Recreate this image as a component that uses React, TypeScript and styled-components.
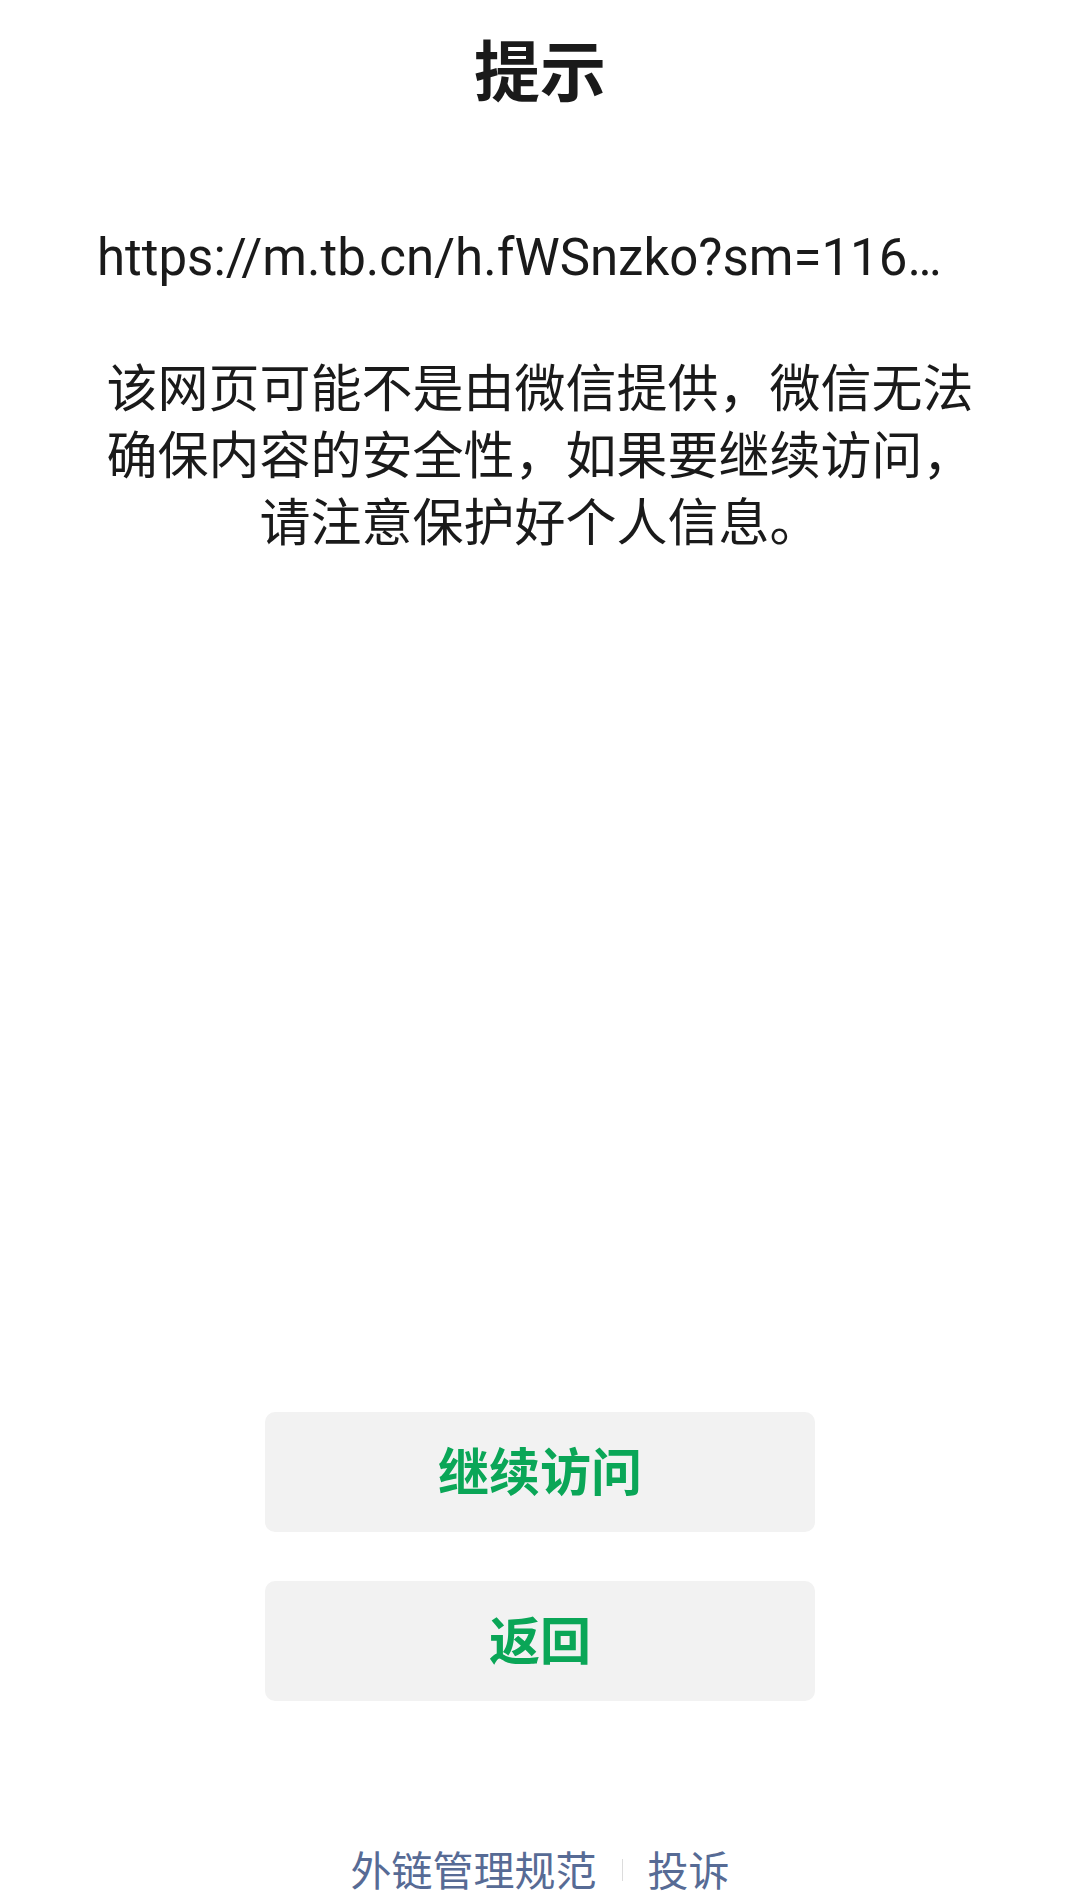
import styled, { createGlobalStyle } from 'styled-components';

const GlobalStyle = createGlobalStyle`
  html, body {
    margin: 0;
    padding: 0;
    background: #fff;
  }
  body {
    font-family: "Noto Sans CJK SC", "Roboto", sans-serif;
    color: #1a1a1a;
  }
`;

const App = () => {
  return (
    <Page>
      <GlobalStyle />
      <Title>提示</Title>
      <Url>https://m.tb.cn/h.fWSnzko?sm=116…</Url>
      <Desc>该网页可能不是由微信提供，微信无法确保内容的安全性，如果要继续访问，请注意保护好个人信息。</Desc>

      <Actions>
        <ActionButton type='button'>继续访问</ActionButton>
        <ActionButton type='button'>返回</ActionButton>
      </Actions>

      <Footer>
        <FooterLink>外链管理规范</FooterLink>
        <Divider />
        <FooterLink>投诉</FooterLink>
      </Footer>
    </Page>
  );
};

export default App;

const Page = styled.main`
  display: flex;
  flex-direction: column;
  min-height: 1904px;
  box-sizing: border-box;
  padding-bottom: 15px;
`;

const Title = styled.h1`
  margin: 34px 0 0;
  font-family: "Noto Sans CJK SC", sans-serif;
  font-size: 66px;
  line-height: 66px;
  font-weight: 700;
  text-align: center;
`;

const Url = styled.div`
  margin-top: 128px;
  padding: 0 97px;
  font-family: "Roboto", sans-serif;
  font-size: 51px;
  line-height: 60px;
  white-space: nowrap;
  overflow: hidden;
  text-overflow: ellipsis;
`;

const Desc = styled.p`
  margin: 64px 0 0;
  padding: 0 97px;
  font-family: "Noto Sans CJK SC", sans-serif;
  font-size: 51px;
  line-height: 67px;
  text-align: center;
`;

const Actions = styled.div`
  margin-top: auto;
  display: flex;
  flex-direction: column;
  align-items: center;
  gap: 49px;
`;

const ActionButton = styled.button`
  width: 550px;
  height: 120px;
  border: none;
  border-radius: 10px;
  background-color: #f2f2f2;
  color: #0aa657;
  font-family: "Noto Sans CJK SC", sans-serif;
  font-size: 51px;
  line-height: 1;
  font-weight: 700;
  padding: 0 0 6px;
`;

const Footer = styled.footer`
  margin-top: 146px;
  display: flex;
  justify-content: center;
  align-items: center;
  height: 42px;
`;

const FooterLink = styled.span`
  font-family: "Noto Sans CJK SC", sans-serif;
  font-size: 41px;
  line-height: 42px;
  color: #576b95;
`;

const Divider = styled.span`
  width: 1px;
  height: 22px;
  margin: 4px 25px 0;
  background-color: #dcdcdc;
`;
